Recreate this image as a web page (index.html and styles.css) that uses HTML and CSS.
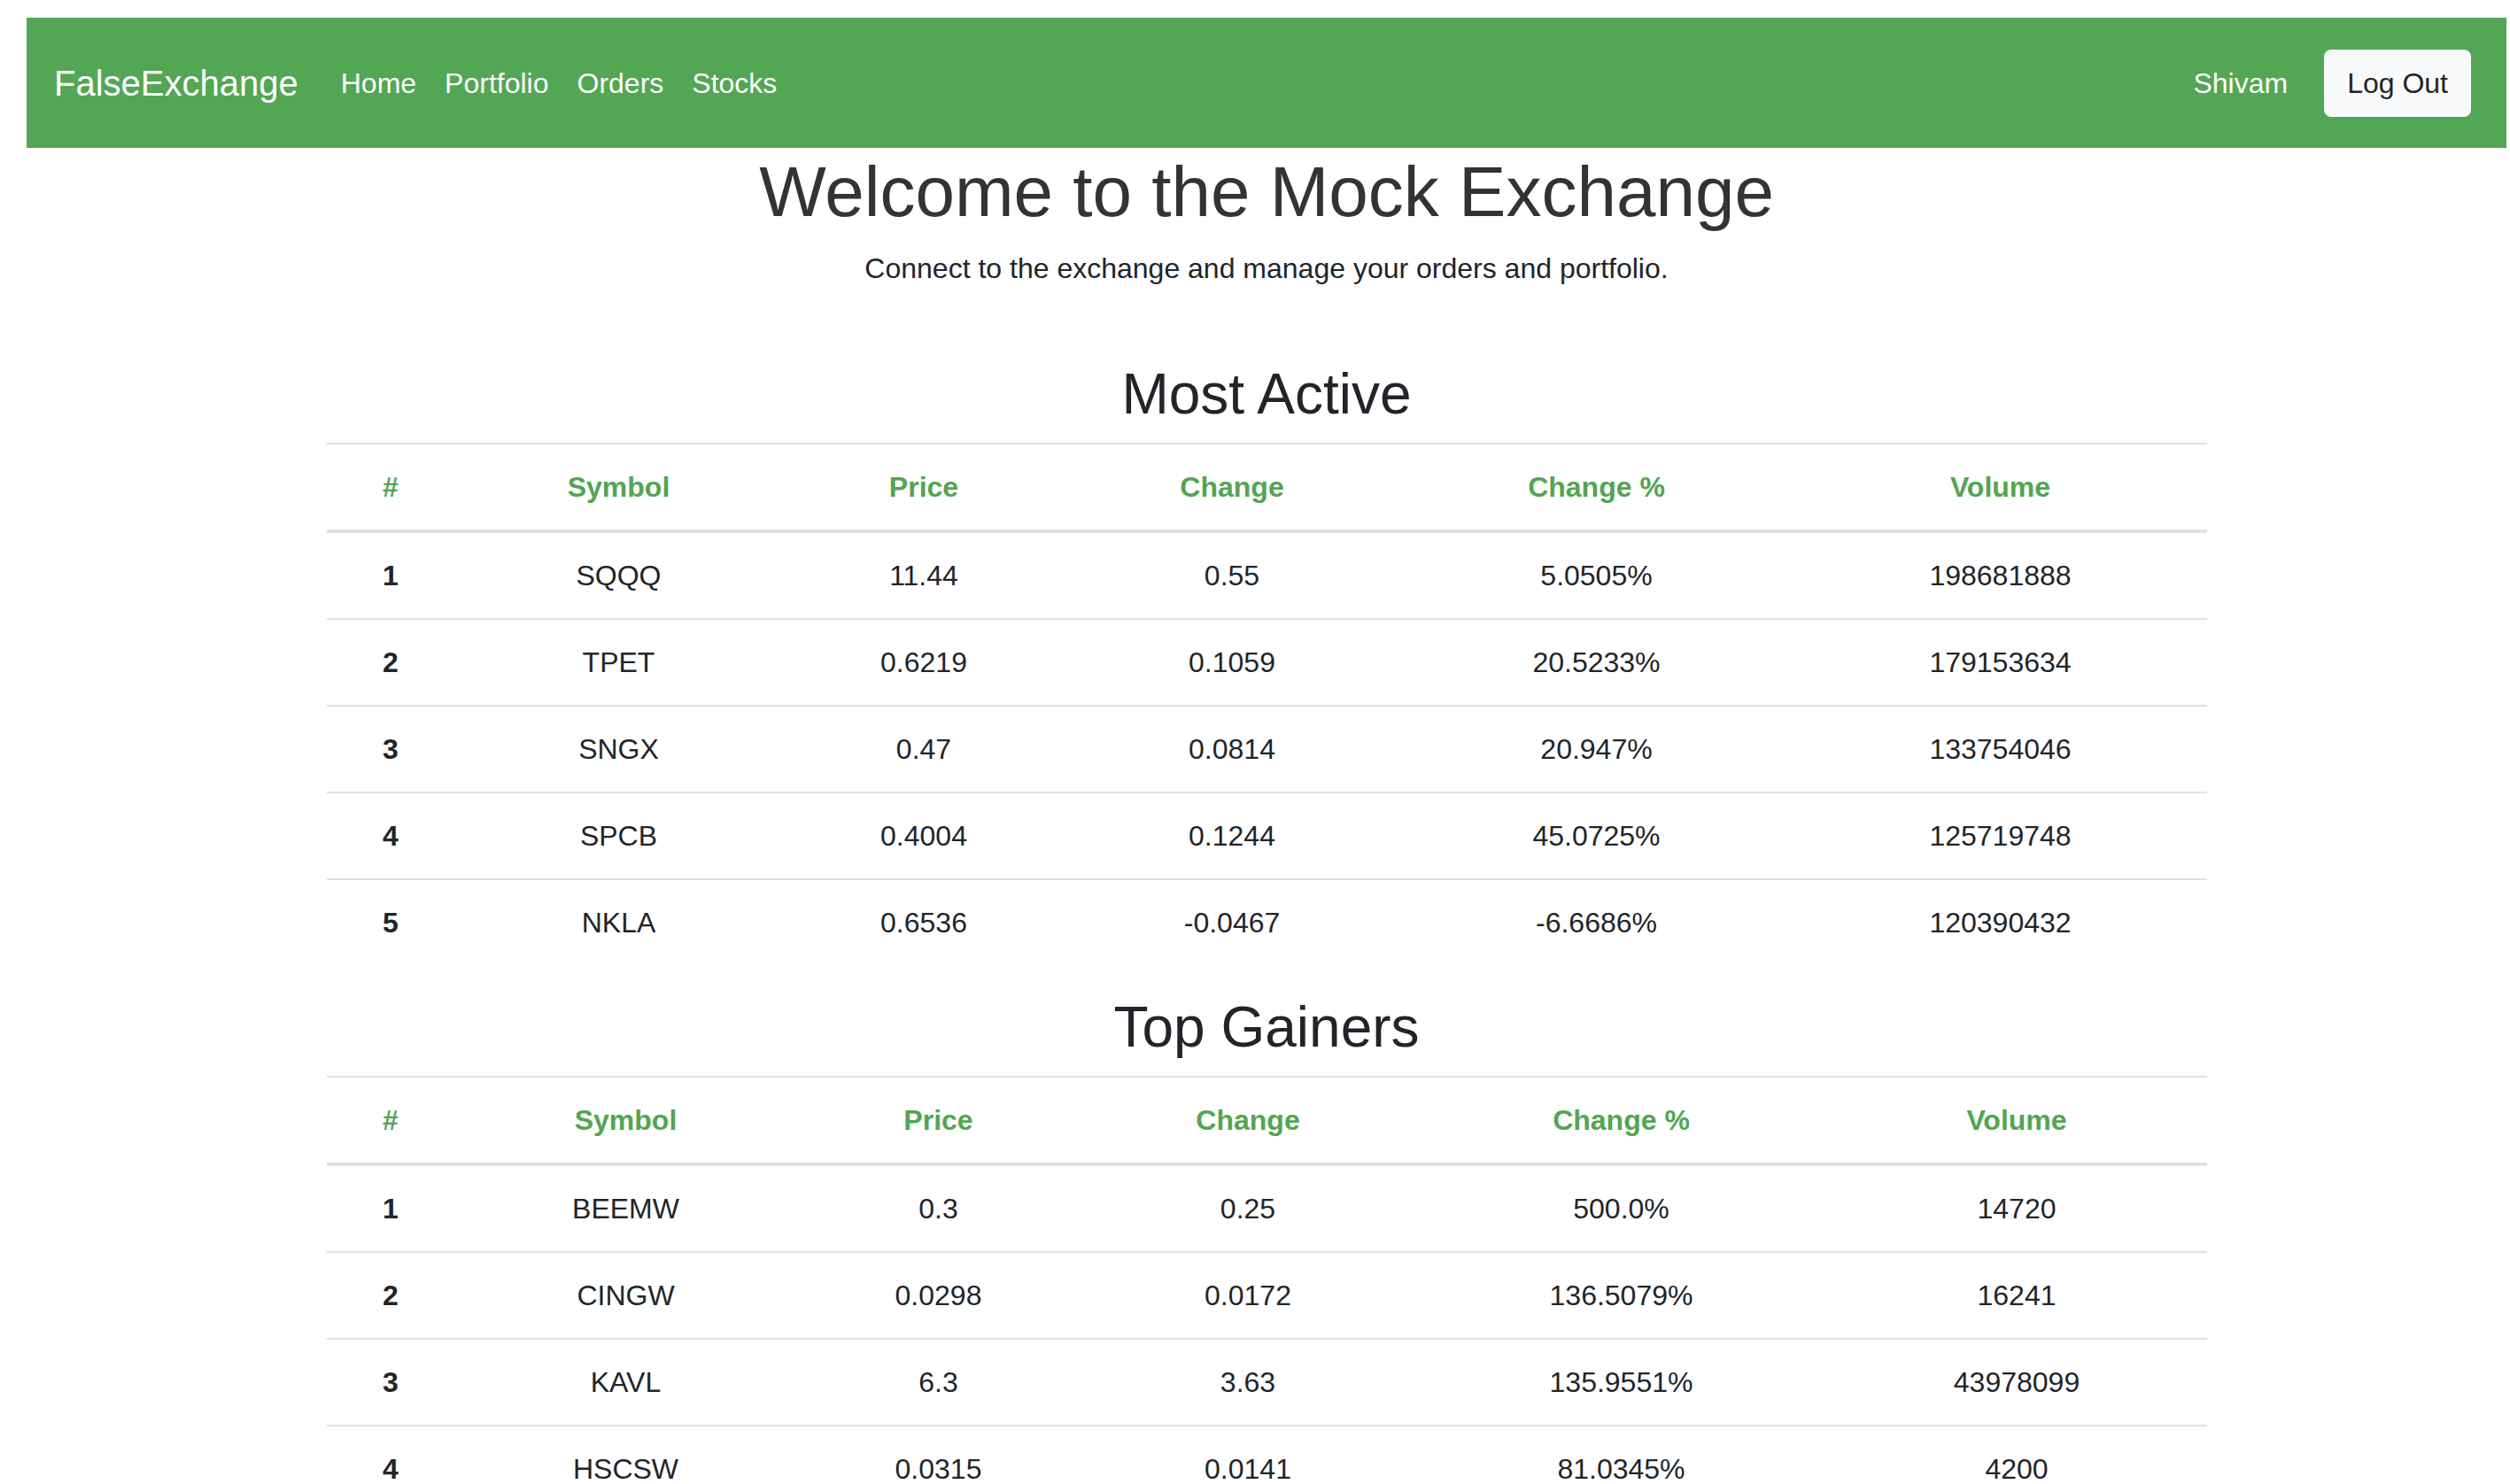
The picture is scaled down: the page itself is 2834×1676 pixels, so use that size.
FILE: index.html
```html
<!DOCTYPE html>
<html lang="en">
<head>
<meta charset="utf-8">
<title>FalseExchange</title>
<link rel="stylesheet" href="styles.css">
</head>
<body>
<div class="page">
  <nav class="navbar">
    <a class="brand" href="#">FalseExchange</a>
    <ul class="nav-links">
      <li><a href="#">Home</a></li>
      <li><a href="#">Portfolio</a></li>
      <li><a href="#">Orders</a></li>
      <li><a href="#">Stocks</a></li>
    </ul>
    <div class="nav-right">
      <span class="user">Shivam</span>
      <button class="btn-light" type="button">Log Out</button>
    </div>
  </nav>

  <main class="container">
    <h1 class="title">Welcome to the Mock Exchange</h1>
    <p class="subtitle">Connect to the exchange and manage your orders and portfolio.</p>

    <h2 class="section-title">Most Active</h2>
    <table class="stocks">
      <colgroup>
        <col class="ma-1"><col class="ma-2"><col class="ma-3"><col class="ma-4"><col class="ma-5"><col class="ma-6">
      </colgroup>
      <thead>
        <tr><th>#</th><th>Symbol</th><th>Price</th><th>Change</th><th>Change %</th><th>Volume</th></tr>
      </thead>
      <tbody>
        <tr><th>1</th><td>SQQQ</td><td>11.44</td><td>0.55</td><td>5.0505%</td><td>198681888</td></tr>
        <tr><th>2</th><td>TPET</td><td>0.6219</td><td>0.1059</td><td>20.5233%</td><td>179153634</td></tr>
        <tr><th>3</th><td>SNGX</td><td>0.47</td><td>0.0814</td><td>20.947%</td><td>133754046</td></tr>
        <tr><th>4</th><td>SPCB</td><td>0.4004</td><td>0.1244</td><td>45.0725%</td><td>125719748</td></tr>
        <tr><th>5</th><td>NKLA</td><td>0.6536</td><td>-0.0467</td><td>-6.6686%</td><td>120390432</td></tr>
      </tbody>
    </table>

    <h2 class="section-title">Top Gainers</h2>
    <table class="stocks">
      <colgroup>
        <col class="tg-1"><col class="tg-2"><col class="tg-3"><col class="tg-4"><col class="tg-5"><col class="tg-6">
      </colgroup>
      <thead>
        <tr><th>#</th><th>Symbol</th><th>Price</th><th>Change</th><th>Change %</th><th>Volume</th></tr>
      </thead>
      <tbody>
        <tr><th>1</th><td>BEEMW</td><td>0.3</td><td>0.25</td><td>500.0%</td><td>14720</td></tr>
        <tr><th>2</th><td>CINGW</td><td>0.0298</td><td>0.0172</td><td>136.5079%</td><td>16241</td></tr>
        <tr><th>3</th><td>KAVL</td><td>6.3</td><td>3.63</td><td>135.9551%</td><td>43978099</td></tr>
        <tr><th>4</th><td>HSCSW</td><td>0.0315</td><td>0.0141</td><td>81.0345%</td><td>4200</td></tr>
      </tbody>
    </table>
  </main>
</div>
</body>
</html>
```

FILE: styles.css
```css
* { box-sizing: border-box; }

html, body {
  margin: 0;
  padding: 0;
  background: #ffffff;
}

body {
  font-family: "Liberation Sans", Arial, Helvetica, sans-serif;
  font-size: 32px;
  line-height: 48px;
  color: #212529;
}

.page {
  padding: 20px 4px 0 30px;
}

/* ---------- navbar ---------- */
.navbar {
  display: flex;
  align-items: center;
  height: 147px;
  padding: 0 40px 0 31px;
  background: #53a653;
}

.brand {
  font-size: 40px;
  line-height: 60px;
  color: #ffffff;
  text-decoration: none;
  margin-right: 32px;
}

.nav-links {
  display: flex;
  list-style: none;
  margin: 0;
  padding: 0;
}

.nav-links a {
  display: block;
  padding: 0 16px;
  color: #ffffff;
  text-decoration: none;
  font-size: 32px;
  line-height: 48px;
}

.nav-right {
  margin-left: auto;
  display: flex;
  align-items: center;
}

.user {
  color: #ffffff;
  padding: 0 16px;
}

.btn-light {
  margin-left: 25px;
  height: 76px;
  padding: 12px 24px;
  font-family: inherit;
  font-size: 32px;
  line-height: 48px;
  color: #212529;
  background: #f8f9fa;
  border: 2px solid #f8f9fa;
  border-radius: 8px;
}

/* ---------- content ---------- */
.container {
  width: 2123px;
  margin: 0 auto;
  text-align: center;
}

.title {
  margin: 2px 0 14px;
  font-size: 80px;
  line-height: 96px;
  font-weight: 400;
  color: #333333;
}

.subtitle {
  margin: 0 0 80px;
  font-size: 32px;
  line-height: 48px;
  color: #212529;
}

.section-title {
  margin: 0 0 16px;
  font-size: 64px;
  line-height: 76.8px;
  font-weight: 400;
  color: #212529;
}

.stocks {
  width: 100%;
  table-layout: fixed;
  border-collapse: collapse;
  margin-bottom: 32px;
  color: #212529;
}

.stocks th,
.stocks td {
  padding: 24px;
  text-align: center;
  vertical-align: top;
  border-top: 2px solid #dee2e6;
  font-size: 32px;
  line-height: 48px;
  white-space: nowrap;
}

.stocks th { font-weight: 700; }

.stocks thead th {
  color: #52a552;
  vertical-align: bottom;
  border-bottom: 4px solid #dee2e6;
}

.ma-1 { width: 145px; }
.ma-2 { width: 370px; }
.ma-3 { width: 319px; }
.ma-4 { width: 377px; }
.ma-5 { width: 446px; }
.ma-6 { width: 466px; }

.tg-1 { width: 145px; }
.tg-2 { width: 386px; }
.tg-3 { width: 320px; }
.tg-4 { width: 379px; }
.tg-5 { width: 464px; }
.tg-6 { width: 429px; }
```
